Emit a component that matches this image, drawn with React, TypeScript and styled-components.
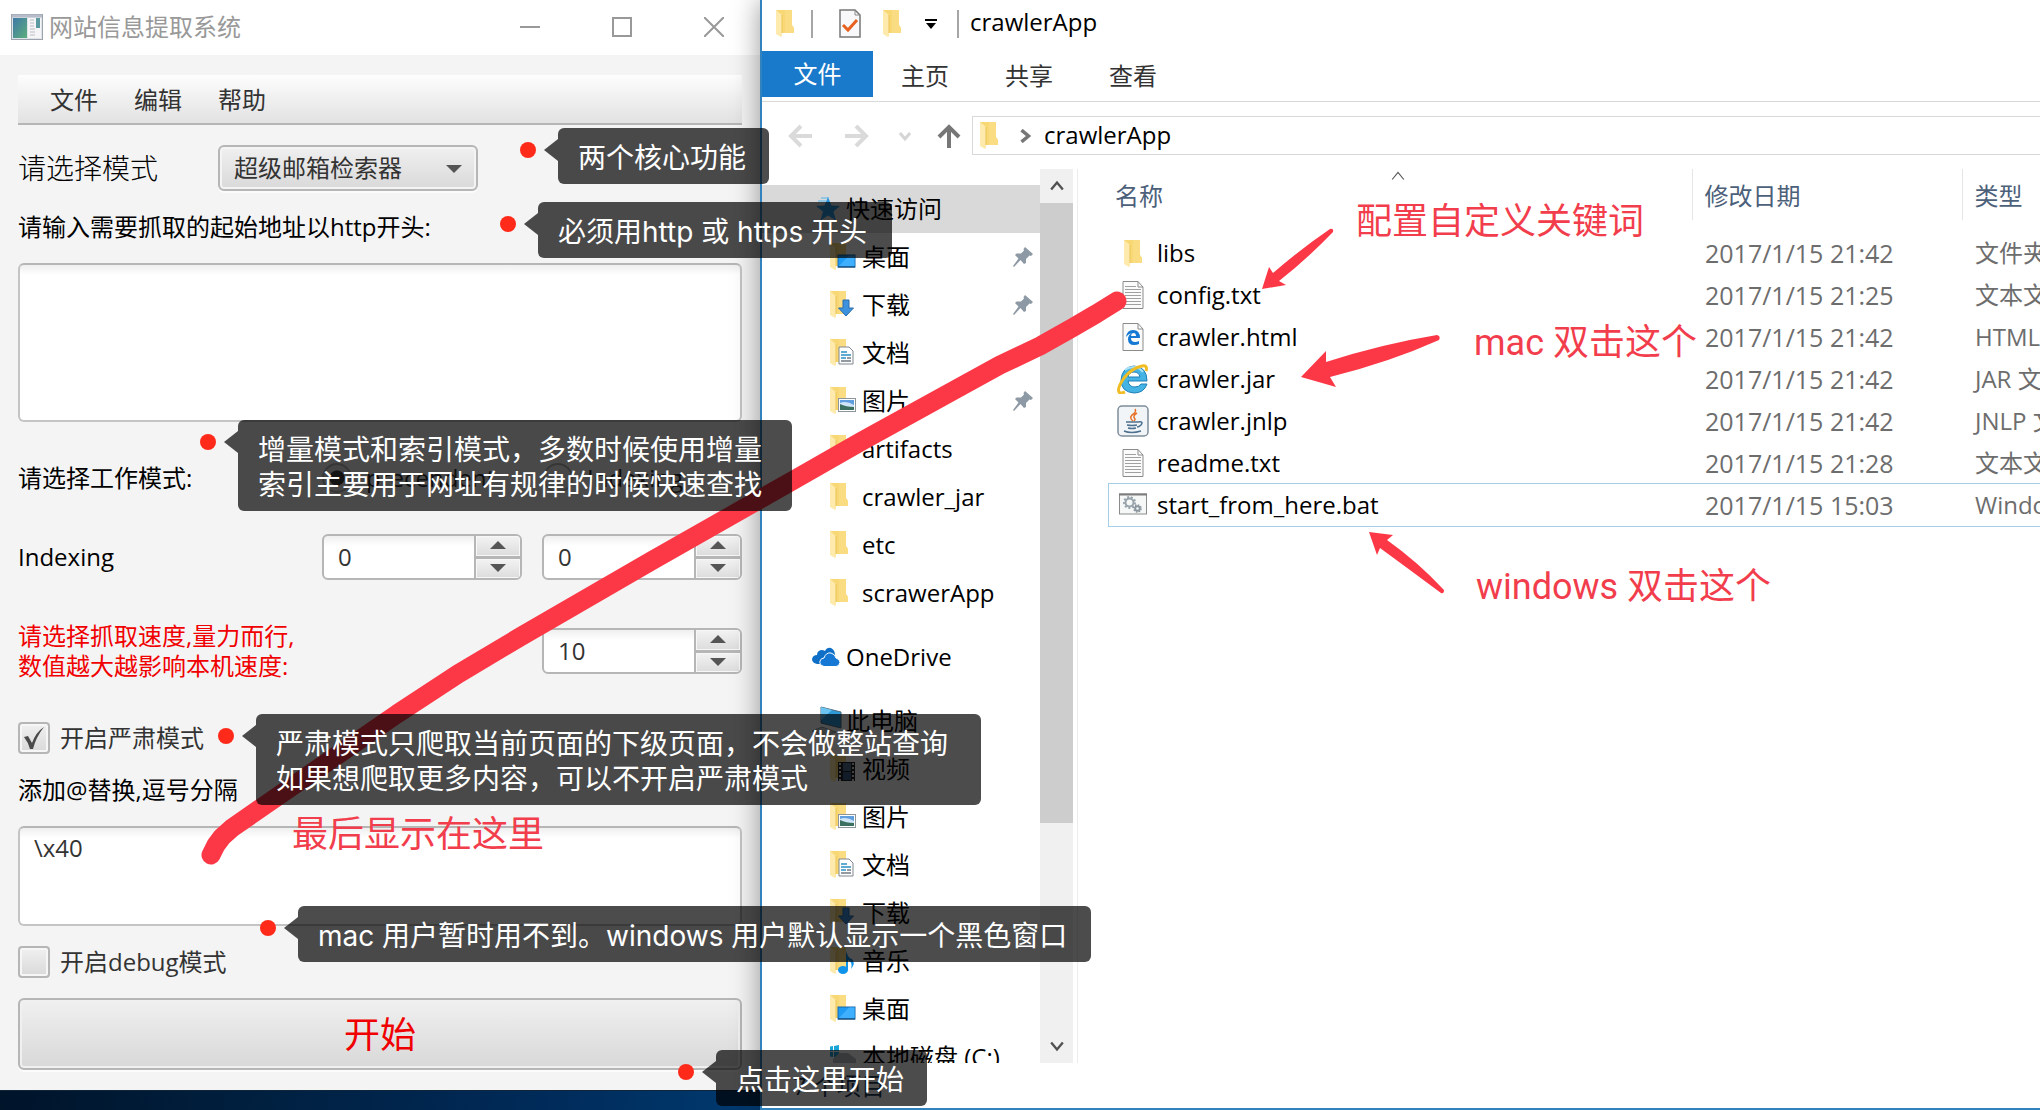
import React, { useState } from "react";
import styled, { createGlobalStyle } from "styled-components";

const uiFont = `"Open Sans", "Noto Sans", "Noto Sans CJK SC", sans-serif`;
const calloutFont = `Inter, Roboto, "Noto Sans CJK SC", sans-serif`;
const noteFont = `Roboto, "Noto Sans CJK SC", sans-serif`;
const borderGrey = "#b6b6b6";
const markRed = "#fc3847";

const GlobalStyle = createGlobalStyle`
  *, *::before, *::after { box-sizing: border-box; }
  body { margin: 0; background: #fff; font-family: ${uiFont}; font-size: 24px; line-height: 32px; color: #000; }
  button, input, select, textarea { font: inherit; color: inherit; margin: 0; }
  svg { display: block; flex: none; }
`;

const Screen = styled.div`
  position: relative;
  display: grid;
  grid-template-columns: minmax(0, 760px) minmax(0, 1fr);
  grid-template-rows: minmax(0, 1fr);
  height: 100vh;
  overflow: hidden;
`;

/* ---------- crawler window ---------- */

const CrawlerColumn = styled.div`
  display: flex;
  flex-direction: column;
  min-height: 0;
`;

const TitleBar = styled.header`
  display: flex;
  flex: none;
  align-items: center;
  height: 55px;
  padding: 0 0 2px 11px;
  background: #fff;
  color: #999;
`;

const TitleText = styled.h1`
  flex: 1;
  margin: 0 0 0 6px;
  font-size: 24px;
  font-weight: 400;
  line-height: 32px;
`;

const PlainButton = styled.button`
  display: grid;
  place-items: center;
  padding: 0;
  border: 0;
  background: none;
`;

const CaptionButton = styled(PlainButton)`
  width: 92px;
  height: 53px;
`;

const CrawlerForm = styled.form`
  display: flex;
  flex: none;
  flex-direction: column;
  gap: 20px;
  padding: 20px 18px;
  background: #f4f4f4;
`;

const MenuBar = styled.div`
  display: flex;
  gap: 36px;
  height: 50px;
  padding: 2px 32px 0;
  border-bottom: 2px solid ${borderGrey};
  background: linear-gradient(#fdfdfd, #e2e2e2);
`;

const MenuItem = styled(PlainButton)`
  color: #333;
`;

const Row = styled.div<{ $height: number; $spaced?: boolean }>`
  display: flex;
  align-items: center;
  min-height: ${(p) => p.$height}px;
  margin-top: ${(p) => (p.$spaced ? 20 : 0)}px;
`;

const RowLabel = styled.label`
  flex: 1;
`;

const ModeLabel = styled.label`
  width: 200px;
  font-size: 28px;
  font-weight: 300;
`;

const SpeedLabel = styled.label`
  flex: 1;
  color: #f00000;
  line-height: 30px;
`;

const SelectBox = styled.div`
  position: relative;
  width: 260px;
  svg {
    position: absolute;
    right: 16px;
    top: 20px;
    pointer-events: none;
  }
`;

const Select = styled.select`
  appearance: none;
  width: 100%;
  height: 46px;
  padding: 0 14px;
  border: 2px solid ${borderGrey};
  border-radius: 6px;
  background: linear-gradient(#f0f0f0, #d9d9d9);
  box-shadow: inset 0 0 0 2px #f4f4f4, 0 2px 0 #fbfbfb;
  color: #333;
`;

const TextBox = styled.textarea<{ $height: number }>`
  display: block;
  width: 100%;
  height: ${(p) => p.$height}px;
  padding: 4px 14px;
  border: 2px solid #c4c4c4;
  border-top-color: ${borderGrey};
  border-radius: 6px;
  background: linear-gradient(#efefef, #fff 10px);
  color: #333;
  resize: none;
  outline: 0;
`;

const SpinnerBox = styled.div`
  display: grid;
  grid-template-columns: 1fr 46px;
  width: 200px;
  height: 46px;
  margin-left: 20px;
  overflow: hidden;
  border: 2px solid ${borderGrey};
  border-radius: 6px;
  background: linear-gradient(#efefef, #fff 10px);
`;

const SpinnerInput = styled.input`
  appearance: textfield;
  width: 100%;
  padding: 0 14px;
  border: 0;
  outline: 0;
  background: none;
  color: #333;
  &::-webkit-inner-spin-button,
  &::-webkit-outer-spin-button {
    appearance: none;
    margin: 0;
  }
`;

const SpinnerArrows = styled.div`
  display: grid;
  grid-template-rows: 1fr 1fr;
  gap: 3px;
  border-left: 2px solid ${borderGrey};
  background: ${borderGrey};
`;

const SpinnerButton = styled(PlainButton)`
  background: linear-gradient(#f3f3f3, #dcdcdc);
  box-shadow: inset 0 0 0 1px #f7f7f7;
`;

const CheckLabel = styled.label`
  display: flex;
  align-items: center;
  gap: 10px;
  color: #333;
`;

const CheckCell = styled.span`
  display: grid;
  place-items: center;
  > * {
    grid-area: 1 / 1;
  }
  svg {
    pointer-events: none;
  }
`;

const CheckInput = styled.input`
  appearance: none;
  width: 32px;
  height: 32px;
  border: 2px solid ${borderGrey};
  border-radius: 4px;
  background: linear-gradient(#f0f0f0, #d9d9d9);
  box-shadow: inset 0 0 0 2px #f6f6f6;
`;

const RadioGroup = styled.div`
  display: flex;
  width: 420px;
`;

const RadioLabel = styled.label<{ $width: number }>`
  display: flex;
  align-items: center;
  gap: 14px;
  width: ${(p) => p.$width}px;
  color: #333;
`;

const RadioInput = styled.input`
  appearance: none;
  width: 30px;
  height: 30px;
  border: 2px solid ${borderGrey};
  border-radius: 50%;
  background: linear-gradient(#f4f4f4, #dcdcdc);
  &:checked {
    background: radial-gradient(#444 0 7px, #e6e6e6 8px);
  }
`;

const StartButton = styled.button`
  height: 72px;
  padding: 2px 0 0;
  border: 2px solid ${borderGrey};
  border-radius: 6px;
  background: linear-gradient(#f0f0f0, #d8d8d8);
  box-shadow: inset 0 0 0 2px #f0f0f0, 0 2px 0 #fcfcfc;
  color: #f00000;
  font-size: 36px;
`;

const Desktop = styled.div`
  flex: 1;
  border-top: 1px solid #10253a;
  background: linear-gradient(90deg, #00142a, #002040 35%, #002a58 70%, #003a70);
`;

/* ---------- explorer window ---------- */

const ExplorerWindow = styled.section`
  position: relative;
  display: flex;
  flex-direction: column;
  min-height: 0;
  border-left: 2px solid #3282bd;
  border-bottom: 2px solid #3282bd;
  background: #fff;
  box-shadow: 0 0 26px rgba(0, 0, 0, 0.4);
`;

const QuickBar = styled.header`
  display: flex;
  align-items: center;
  height: 51px;
  padding: 0 14px 4px;
`;

const QuickTitle = styled.span`
  padding-bottom: 4px;
`;

const QuickIcon = styled.span<{ $gap: number }>`
  margin-right: ${(p) => p.$gap}px;
`;

const QuickDivider = styled.span<{ $gap: number }>`
  width: 2px;
  height: 28px;
  margin-right: ${(p) => p.$gap}px;
  background: #a6a6a6;
`;

const Ribbon = styled.nav`
  display: flex;
  height: 51px;
  border-bottom: 1px solid #d9d9d9;
`;

const RibbonTab = styled(PlainButton)<{ $active?: boolean }>`
  width: ${(p) => (p.$active ? 111 : 104)}px;
  height: 46px;
  padding-top: ${(p) => (p.$active ? 0 : 4)}px;
  color: ${(p) => (p.$active ? "#fff" : "#333")};
  background: ${(p) => (p.$active ? "#1979ca" : "none")};
`;

const AddressRow = styled.div`
  display: flex;
  align-items: center;
  height: 67px;
`;

const NavButtons = styled.div`
  display: grid;
  grid-template-columns: 24px 24px 12px 24px;
  align-items: center;
  column-gap: 33px;
  width: 210px;
  padding-left: 26px;
  button:nth-child(n + 3) {
    justify-self: end;
    margin-right: 3px;
  }
  button:nth-child(4) {
    margin-right: 10px;
  }
`;

const AddressBox = styled.div`
  display: flex;
  align-items: center;
  flex: 1;
  height: 39px;
  padding-left: 7px;
  border: 1px solid #d9d9d9;
  border-right: 0;
`;

const Crumb = styled.a`
  margin-left: 12px;
  padding-bottom: 2px;
  color: #000;
  text-decoration: none;
`;

const CrumbArrow = styled.span`
  margin-left: 20px;
`;

const ExplorerBody = styled.div`
  display: grid;
  grid-template-columns: 278px 33px 5px minmax(0, 1fr);
  grid-template-rows: minmax(0, 1fr);
  flex: 1;
  min-height: 0;
`;

const Sidebar = styled.nav`
  overflow: hidden;
`;

const SideGroup = styled.ul`
  margin: 16px 0 0;
  padding: 0;
  list-style: none;
`;

const SideLink = styled.a<{ $level: number; $selected?: boolean }>`
  display: grid;
  grid-template-columns: ${(p) => (p.$level ? 26 : 30)}px 1fr 20px;
  column-gap: ${(p) => (p.$level ? 6 : 4)}px;
  align-items: center;
  height: 48px;
  padding: 0 7px 0 ${(p) => (p.$level ? 68 : 50)}px;
  background: ${(p) => (p.$selected ? "#d9d9d9" : "none")};
  color: #000;
  text-decoration: none;
  white-space: nowrap;
`;

const ScrollBar = styled.div`
  display: flex;
  flex-direction: column;
  background: #f0f0f0;
`;

const ScrollButton = styled(PlainButton)`
  height: 34px;
`;

const ScrollTrack = styled.div`
  flex: 1;
`;

const ScrollThumb = styled.div`
  height: 75%;
  background: #cdcdcd;
`;

const Splitter = styled.div`
  border-right: 1px solid #ececec;
`;

const FilePane = styled.main`
  min-width: 0;
  padding-left: 31px;
  overflow: hidden;
`;

const FileTable = styled.table`
  width: 100%;
  table-layout: fixed;
  border-collapse: collapse;
`;

const HeadCell = styled.th<{ $width?: string; $inset: number }>`
  position: relative;
  width: ${(p) => p.$width ?? "auto"};
  height: 51px;
  padding: 2px 0 0 ${(p) => p.$inset}px;
  border-left: ${(p) => (p.$inset > 6 ? "1px solid #e5e5e5" : "0")};
  color: #4c607a;
  font-weight: 400;
  text-align: left;
  white-space: nowrap;
  overflow: hidden;
`;

const SortMark = styled.span`
  position: absolute;
  top: 0;
  left: 282px;
`;

const HeadGap = styled.tr`
  height: 12px;
`;

const FileRow = styled.tr<{ $focused?: boolean }>`
  height: 42px;
  outline: ${(p) => (p.$focused ? "1px solid #a6cde8" : "0")};
`;

const NameCell = styled.td`
  padding: 0;
`;

const NameLayout = styled.span`
  display: grid;
  grid-template-columns: 32px 1fr;
  column-gap: 8px;
  align-items: center;
  justify-items: center;
  padding-left: 8px;
`;

const FileName = styled.span`
  justify-self: start;
`;

const InfoCell = styled.td<{ $size: number }>`
  padding: 0 0 0 13px;
  color: #6d6d6d;
  font-size: ${(p) => p.$size}px;
  white-space: nowrap;
  overflow: hidden;
`;

const StatusBar = styled.footer`
  height: 45px;
  padding: 7px 31px;
  color: #1e395b;
`;

/* ---------- annotations ---------- */

const MarkLayer = styled.svg`
  position: absolute;
  left: 0;
  top: 0;
  pointer-events: none;
`;

const Callout = styled.div<{ $x: number; $y: number; $width: number }>`
  position: absolute;
  left: ${(p) => p.$x}px;
  top: ${(p) => p.$y}px;
  width: ${(p) => p.$width}px;
  padding: 13px 20px 8px;
  border-radius: 6px;
  background: rgba(0, 0, 0, 0.7);
  color: #fff;
  font-family: ${calloutFont};
  font-size: 28px;
  line-height: 35px;
  white-space: pre;
  &::before {
    content: "";
    position: absolute;
    left: -14px;
    top: 11px;
    border: solid transparent;
    border-width: 11px 14px 11px 0;
    border-right-color: rgba(0, 0, 0, 0.7);
  }
  &::after {
    content: "";
    position: absolute;
    left: -38px;
    top: 14px;
    width: 16px;
    height: 16px;
    border-radius: 50%;
    background: #ff2a1a;
  }
`;

const RedNote = styled.div<{ $x: number; $y: number }>`
  position: absolute;
  left: ${(p) => p.$x}px;
  top: ${(p) => p.$y}px;
  color: #f23d4c;
  font-family: ${noteFont};
  font-size: 36px;
  line-height: 44px;
  white-space: nowrap;
`;

/* ---------- icons ---------- */

const folderShapes = (
  <>
    <path d="M0 0H16V15L18 18V23H3Z" fill="#f8d775" />
    <path d="M9 0H16V15L18 18V23H9Z" fill="#fbdf8b" opacity="0.6" />
    <path d="M0 0L6 5V26L5 27L0 24Z" fill="#fdeaac" />
    <path d="M6 5V23" stroke="#ecc55a" strokeWidth="1" />
  </>
);

const FolderIcon = () => (
  <svg width="18" height="27" viewBox="0 0 18 27">{folderShapes}</svg>
);

type Badge = "desktop" | "download" | "document" | "picture" | "video" | "music" | "none";

const badgeShapes: Record<Badge, React.ReactNode> = {
  none: null,
  desktop: (
    <>
      <rect x="8" y="12" width="17" height="12" fill="#1e9bf5" stroke="#1669a8" />
      <path d="M9 23L19 12.500H24.500V23Z" fill="#3fb0ff" />
      <path d="M8 24H25" stroke="#123f68" />
    </>
  ),
  download: <path d="M13 9H19V17H23.500L16 25L8.500 17H13Z" fill="#3c92dd" stroke="#2a6cae" />,
  document: (
    <>
      <path d="M9 8H19L23 12V25H9Z" fill="#fff" stroke="#7e8790" />
      <path d="M11 13H17M11 16H21M11 19H16" stroke="#2e8fc4" strokeWidth="1.500" />
      <path d="M17 19H21M11 22H21" stroke="#707a84" strokeWidth="1.500" />
    </>
  ),
  picture: (
    <>
      <rect x="8.500" y="11.500" width="17" height="13" fill="#fff" stroke="#8c949c" />
      <rect x="10" y="13" width="14" height="10" fill="#5f9fe0" />
      <path d="M10 16Q16 13 24 18V20H10Z" fill="#cfe5f7" />
      <path d="M10 17Q16 20 24 20V23H10Z" fill="#3b7060" />
    </>
  ),
  video: (
    <>
      <rect x="8" y="7" width="17" height="19" fill="#222" />
      <path d="M10 8V26M23 8V26" stroke="#ddd" strokeWidth="2" strokeDasharray="2 2" />
      <rect x="13" y="8" width="8" height="8" fill="#56708c" />
      <rect x="13" y="17" width="8" height="8" fill="#3e5a86" />
    </>
  ),
  music: (
    <>
      <ellipse cx="13" cy="23" rx="5" ry="4" fill="#1193ea" />
      <path d="M16 23V4Q18 11 22 12Q26 16 21 22Q23 15 18 13V23Z" fill="#1193ea" />
    </>
  ),
};

const BadgedFolder = ({ badge }: { badge: Badge }) => (
  <svg width="26" height="28" viewBox="0 0 26 28">
    {folderShapes}
    {badgeShapes[badge]}
  </svg>
);

const StarIcon = () => (
  <svg width="30" height="26" viewBox="-3 0 30 26">
    <path d="M13 1L16.500 9.500L25 10L18.500 15.500L21 24.500L13 19.500L5.500 24.500L8 15.500L1 10L9.500 9.500Z" fill="#2b94da" />
    <path d="M6 2H14M3 5H11" stroke="#4fb4ee" />
  </svg>
);

const CloudIcon = () => (
  <svg width="28" height="20" viewBox="0 0 28 20">
    <path d="M5 17Q0 16 0 12Q1 8 5 8Q5 4 9 3Q12 3 13 4Q15 0 19 1Q23 3 23 8L14 17Z" fill="#0f6fc6" />
    <path d="M12 19.500Q7 18 8 14Q9 11 12 11Q14 5 19 6Q23 7 24 11Q28 12 28 15.500Q27 19.500 24 19.500Z" fill="#1478d4" stroke="#fff" />
  </svg>
);

const ComputerIcon = () => (
  <svg width="30" height="30" viewBox="0 0 30 30">
    <path d="M9 1L29 6V22L9 17Z" fill="#2c9bd8" stroke="#4f6b7e" />
    <path d="M9 1L20 4L9 14Z" fill="#6cc4f0" />
    <path d="M0 25L10 21L24 26L14 30Z" fill="#c7cdd2" stroke="#929ba3" />
  </svg>
);

const DiskIcon = () => (
  <svg width="30" height="26" viewBox="3 0 30 26">
    <path d="M1 3L6 2V7H1ZM7 2L12 1V7H7ZM1 8H6V13L1 12ZM7 8H12V14L7 13Z" fill="#18a5d8" />
    <path d="M6 15L12 9H21L29 15V21H6Z" fill="#b9bec3" />
  </svg>
);

const PinIcon = () => (
  <svg width="20" height="20" viewBox="0 0 20 20">
    <path d="M12 0L20 7L18 9L16.500 8.500L13 12V16L11 17L7.500 13L1 20L0 19L5.500 11.500L2 8L3.500 6.500H8L11 3.500L10.500 2Z" fill="#8d9aa5" />
  </svg>
);

const TextFileIcon = () => (
  <svg width="22" height="28" viewBox="0 0 22 28">
    <path d="M1 .5H16L21 6V27.500H1Z" fill="#fbfbfb" stroke="#8b8b8b" />
    <path d="M16 .5V6H21" fill="none" stroke="#8b8b8b" />
    <path d="M3 5.500H14M3 8.500H19M3 11.500H19M3 14.500H19M3 17.500H19M3 20.500H19M3 23.500H19" stroke="#a0a0a0" />
  </svg>
);

const CheckFileIcon = () => (
  <svg width="22" height="29" viewBox="0 0 22 29">
    <path d="M1 1H16L21 6V28H1Z" fill="#f8f8fa" stroke="#777" strokeWidth="1.500" />
    <path d="M16 1V6H21" fill="none" stroke="#888" />
    <path d="M4 16L9 21L18 11" fill="none" stroke="#e8601f" strokeWidth="3" />
  </svg>
);

const HtmlFileIcon = () => (
  <svg width="22" height="28" viewBox="0 0 22 28">
    <path d="M1 .5H16L21 6V27.500H1Z" fill="#fbfbfb" stroke="#8b8b8b" />
    <path d="M16 .5V6H21" fill="none" stroke="#8b8b8b" />
    <path d="M4 14Q5 7 11 7Q18 7 18 15H9Q9 19 13 19Q15 19 17 18V21Q15 22 12 22Q6 22 6 16Q6 12 10 10Q6 11 4 14ZM9 13H14Q14 10 11.500 10Q9.500 10 9 13Z" fill="#1478d4" fillRule="evenodd" />
  </svg>
);

const ExplorerIcon = () => (
  <svg width="32" height="30" viewBox="0 0 32 30">
    <path d="M30 17H11Q12 23 18 23Q22 23 24 20H30Q27 29 17 29Q4 28 4 16Q5 3 17 2Q30 3 30 17ZM11 13H23Q22 8 17 8Q12 8 11 13Z" fill="#45b4e4" stroke="#1d7fb8" fillRule="evenodd" />
    <path d="M8 6Q12 3 18 3Q23 4 26 8" fill="none" stroke="#a8e2f7" strokeWidth="2" />
    <path d="M29 7Q31 1 25 2Q15 4 7 14Q0 24 2 28Q3 30 8 28" fill="none" stroke="#f0bd24" strokeWidth="3" />
  </svg>
);

const JavaIcon = () => (
  <svg width="32" height="32" viewBox="0 0 32 32">
    <rect x="1" y="1" width="30" height="30" rx="4" fill="#f2f5f7" stroke="#7f8d99" strokeWidth="1.500" />
    <path d="M18 4Q20 7 15 10Q12 13 16 16M20 8Q15 11 18 14Q18 15 17 16" fill="none" stroke="#e6702a" strokeWidth="1.500" />
    <path d="M9 17H21Q27 16 24 20Q22 22 20 22M10 20Q15 21 20 20M11 23Q15 24 19 23M7 26Q14 29 24 26" fill="none" stroke="#4d7190" strokeWidth="1.500" />
  </svg>
);

const BatchIcon = () => (
  <svg width="28" height="25" viewBox="0 0 28 25">
    <rect x=".5" y="1" width="27" height="20" fill="#f6f7f7" stroke="#8b8b8b" />
    <path d="M0 1.500H28" stroke="#7c7c7c" strokeWidth="2" />
    <circle cx="10.500" cy="9.500" r="4" fill="none" stroke="#98a4ac" strokeWidth="2" />
    <circle cx="10.500" cy="9.500" r="5.500" fill="none" stroke="#98a4ac" strokeWidth="2" strokeDasharray="2 1.800" />
    <circle cx="18.500" cy="15.500" r="2.300" fill="none" stroke="#8b979f" strokeWidth="2" />
    <circle cx="18.500" cy="15.500" r="3.600" fill="none" stroke="#8b979f" strokeWidth="1.500" strokeDasharray="1.500 1.300" />
  </svg>
);

const AppIcon = () => (
  <svg width="32" height="26" viewBox="0 0 32 26">
    <defs>
      <linearGradient id="appPane" x1="0" y1="0" x2="1" y2="1">
        <stop offset="0" stopColor="#3f78a8" />
        <stop offset="1" stopColor="#5cae7c" />
      </linearGradient>
    </defs>
    <rect x=".5" y=".5" width="31" height="25" fill="#dfe3ea" stroke="#9da3ad" />
    <path d="M1 2H31" stroke="#b6bcc8" strokeWidth="3" />
    <rect x="2" y="4" width="14" height="20" fill="url(#appPane)" />
    <rect x="17" y="4" width="13" height="20" fill="#f5f5f7" />
    <rect x="25" y="4" width="4" height="10" fill="#5a9aa0" />
    <path d="M19 6H23M19 9H23M19 12H23M19 15H24M19 18H24M19 21H24" stroke="#b9bdc4" />
  </svg>
);

const Triangle = ({ up, width = 16 }: { up?: boolean; width?: number }) => (
  <svg width={width} height="9" viewBox="0 0 16 9">
    <path d={up ? "M0 8L8 0L16 8Z" : "M0 0H16L8 8Z"} fill="#555" />
  </svg>
);

const Chevron = ({ turn, color, size = 12, weight = 3 }: { turn: number; color: string; size?: number; weight?: number }) => (
  <svg width={size} height={size} viewBox="0 0 12 12">
    <path d="M1 9L6 3L11 9" fill="none" stroke={color} strokeWidth={weight} transform={`rotate(${turn} 6 6)`} />
  </svg>
);

const Arrow = ({ turn, color, weight = 4 }: { turn: number; color: string; weight?: number }) => (
  <svg width="24" height="24" viewBox="0 0 24 24">
    <path d="M2 13L12 3L22 13M12 3V24" fill="none" stroke={color} strokeWidth={weight} transform={`rotate(${turn} 12 12)`} />
  </svg>
);

/* ---------- parts ---------- */

const Spinner = ({ label, id, initial }: { label?: string; id: string; initial: number }) => {
  const [value, setValue] = useState(initial);
  return (
    <SpinnerBox>
      <SpinnerInput id={id} aria-label={label} type="number" value={value} onChange={(e) => setValue(Number(e.target.value))} />
      <SpinnerArrows>
        <SpinnerButton type="button" aria-label="+" onClick={() => setValue(value + 1)}>
          <Triangle up />
        </SpinnerButton>
        <SpinnerButton type="button" aria-label="-" onClick={() => setValue(value - 1)}>
          <Triangle />
        </SpinnerButton>
      </SpinnerArrows>
    </SpinnerBox>
  );
};

const CheckBox = ({ label, initial }: { label: string; initial: boolean }) => {
  const [checked, setChecked] = useState(initial);
  return (
    <CheckLabel>
      <CheckCell>
        <CheckInput type="checkbox" checked={checked} onChange={() => setChecked(!checked)} />
        {checked && (
          <svg width="22" height="24" viewBox="0 0 22 24">
            <path d="M1 11L5 10L9 17Q13 6 21 1Q13 11 10 23H7Q5 16 1 11Z" fill="#4a4a4a" />
          </svg>
        )}
      </CheckCell>
      {label}
    </CheckLabel>
  );
};

type SideItem = { name: string; icon: React.ReactNode; level: number; pinned?: boolean; selected?: boolean };

const folder = (name: string, badge: Badge = "none", pinned = false): SideItem => ({
  name,
  icon: <BadgedFolder badge={badge} />,
  level: 1,
  pinned,
});

const sideGroups: SideItem[][] = [
  [
    { name: "快速访问", icon: <StarIcon />, level: 0, selected: true },
    folder("桌面", "desktop", true),
    folder("下载", "download", true),
    folder("文档", "document"),
    folder("图片", "picture", true),
    folder("artifacts"),
    folder("crawler_jar"),
    folder("etc"),
    folder("scrawerApp"),
  ],
  [{ name: "OneDrive", icon: <CloudIcon />, level: 0 }],
  [
    { name: "此电脑", icon: <ComputerIcon />, level: 0 },
    folder("视频", "video"),
    folder("图片", "picture"),
    folder("文档", "document"),
    folder("下载", "download"),
    folder("音乐", "music"),
    folder("桌面", "desktop"),
    { name: "本地磁盘 (C:)", icon: <DiskIcon />, level: 1 },
  ],
];

const files = [
  { name: "libs", icon: <FolderIcon />, date: "2017/1/15 21:42", type: "文件夹" },
  { name: "config.txt", icon: <TextFileIcon />, date: "2017/1/15 21:25", type: "文本文档" },
  { name: "crawler.html", icon: <HtmlFileIcon />, date: "2017/1/15 21:42", type: "HTML 文件" },
  { name: "crawler.jar", icon: <ExplorerIcon />, date: "2017/1/15 21:42", type: "JAR 文件" },
  { name: "crawler.jnlp", icon: <JavaIcon />, date: "2017/1/15 21:42", type: "JNLP 文件" },
  { name: "readme.txt", icon: <TextFileIcon />, date: "2017/1/15 21:28", type: "文本文档" },
  { name: "start_from_here.bat", icon: <BatchIcon />, date: "2017/1/15 15:03", type: "Windows 批处理文件", focused: true },
];

const callouts = [
  { x: 558, y: 128, width: 211, text: "两个核心功能" },
  { x: 538, y: 202, width: 354, text: "必须用http 或 https 开头" },
  { x: 238, y: 420, width: 554, text: "增量模式和索引模式，多数时候使用增量\n索引主要用于网址有规律的时候快速查找" },
  { x: 256, y: 714, width: 725, text: "严肃模式只爬取当前页面的下级页面，不会做整站查询\n如果想爬取更多内容，可以不开启严肃模式" },
  { x: 298, y: 906, width: 793, text: "mac 用户暂时用不到。windows 用户默认显示一个黑色窗口" },
  { x: 716, y: 1050, width: 211, text: "点击这里开始" },
];

const CrawlerApp = () => (
  <CrawlerColumn>
    <TitleBar>
      <AppIcon />
      <TitleText>网站信息提取系统</TitleText>
      <CaptionButton type="button" aria-label="最小化">
        <svg width="20" height="20" viewBox="0 0 20 20"><path d="M0 10H20" stroke="#999" strokeWidth="2" /></svg>
      </CaptionButton>
      <CaptionButton type="button" aria-label="最大化">
        <svg width="20" height="20" viewBox="0 0 20 20"><rect x="1" y="1" width="18" height="18" fill="none" stroke="#999" strokeWidth="2" /></svg>
      </CaptionButton>
      <CaptionButton type="button" aria-label="关闭">
        <svg width="20" height="20" viewBox="0 0 20 20"><path d="M0 0L20 20M20 0L0 20" stroke="#999" strokeWidth="2" /></svg>
      </CaptionButton>
    </TitleBar>
    <CrawlerForm onSubmit={(e) => e.preventDefault()}>
      <MenuBar>
        <MenuItem type="button">文件</MenuItem>
        <MenuItem type="button">编辑</MenuItem>
        <MenuItem type="button">帮助</MenuItem>
      </MenuBar>
      <Row $height={46}>
        <ModeLabel htmlFor="mode">请选择模式</ModeLabel>
        <SelectBox>
          <Select id="mode">
            <option>超级邮箱检索器</option>
          </Select>
          <Triangle />
        </SelectBox>
      </Row>
      <RowLabel htmlFor="address">请输入需要抓取的起始地址以http开头:</RowLabel>
      <TextBox id="address" $height={159} />
      <Row $height={32} $spaced>
        <RowLabel as="span">请选择工作模式:</RowLabel>
        <RadioGroup>
          <RadioLabel $width={221}>
            <RadioInput type="radio" name="work" defaultChecked />
            precendent
          </RadioLabel>
          <RadioLabel $width={180}>
            <RadioInput type="radio" name="work" />
            Indexing
          </RadioLabel>
        </RadioGroup>
      </Row>
      <Row $height={46} $spaced>
        <RowLabel htmlFor="indexFrom">Indexing</RowLabel>
        <Spinner id="indexFrom" initial={0} />
        <Spinner id="indexTo" label="Indexing" initial={0} />
      </Row>
      <Row $height={62} $spaced>
        <SpeedLabel htmlFor="speed">
          请选择抓取速度,量力而行,
          <br />
          数值越大越影响本机速度:
        </SpeedLabel>
        <Spinner id="speed" initial={10} />
      </Row>
      <Row $height={32} $spaced>
        <CheckBox label="开启严肃模式" initial />
      </Row>
      <RowLabel htmlFor="replace">添加@替换,逗号分隔</RowLabel>
      <TextBox id="replace" $height={100} defaultValue={"\\x40"} />
      <Row $height={32}>
        <CheckBox label="开启debug模式" initial={false} />
      </Row>
      <StartButton type="submit">开始</StartButton>
    </CrawlerForm>
    <Desktop />
  </CrawlerColumn>
);

const Explorer = () => (
  <ExplorerWindow>
    <QuickBar>
      <QuickIcon $gap={17}><FolderIcon /></QuickIcon>
      <QuickDivider $gap={26} />
      <QuickIcon $gap={22}><CheckFileIcon /></QuickIcon>
      <QuickIcon $gap={24}><FolderIcon /></QuickIcon>
      <QuickIcon $gap={20}>
        <svg width="12" height="10" viewBox="0 0 12 10"><path d="M0 1H12" stroke="#000" strokeWidth="2" /><path d="M1 4H11L6 10Z" /></svg>
      </QuickIcon>
      <QuickDivider $gap={11} />
      <QuickTitle>crawlerApp</QuickTitle>
    </QuickBar>
    <Ribbon>
      <RibbonTab type="button" $active>文件</RibbonTab>
      <RibbonTab type="button">主页</RibbonTab>
      <RibbonTab type="button">共享</RibbonTab>
      <RibbonTab type="button">查看</RibbonTab>
    </Ribbon>
    <AddressRow>
      <NavButtons>
        <PlainButton type="button" aria-label="后退"><Arrow turn={-90} color="#dadada" /></PlainButton>
        <PlainButton type="button" aria-label="前进"><Arrow turn={90} color="#dadada" /></PlainButton>
        <PlainButton type="button" aria-label="历史"><Chevron turn={180} color="#d5d5d5" /></PlainButton>
        <PlainButton type="button" aria-label="向上"><Arrow turn={0} color="#777" /></PlainButton>
      </NavButtons>
      <AddressBox>
        <FolderIcon />
        <CrumbArrow><Chevron turn={90} color="#777" size={14} weight={3} /></CrumbArrow>
        <Crumb href="#crawlerApp">crawlerApp</Crumb>
      </AddressBox>
    </AddressRow>
    <ExplorerBody>
      <Sidebar>
        {sideGroups.map((group, g) => (
          <SideGroup key={g}>
            {group.map((item) => (
              <li key={item.name}>
                <SideLink href="#files" $level={item.level} $selected={item.selected}>
                  {item.icon}
                  <span>{item.name}</span>
                  {item.pinned && <PinIcon />}
                </SideLink>
              </li>
            ))}
          </SideGroup>
        ))}
      </Sidebar>
      <ScrollBar>
        <ScrollButton type="button" aria-label="向上滚动"><Chevron turn={0} color="#505050" size={14} weight={2} /></ScrollButton>
        <ScrollTrack><ScrollThumb /></ScrollTrack>
        <ScrollButton type="button" aria-label="向下滚动"><Chevron turn={180} color="#505050" size={14} weight={2} /></ScrollButton>
      </ScrollBar>
      <Splitter />
      <FilePane>
        <FileTable>
          <thead>
            <tr>
              <HeadCell $inset={6}>
                名称
                <SortMark><Chevron turn={0} color="#555" size={14} weight={1} /></SortMark>
              </HeadCell>
              <HeadCell $width="270px" $inset={12}>修改日期</HeadCell>
              <HeadCell $width="78px" $inset={12}>类型</HeadCell>
            </tr>
          </thead>
          <tbody>
            <HeadGap />
            {files.map((file) => (
              <FileRow key={file.name} $focused={file.focused}>
                <NameCell>
                  <NameLayout>
                    {file.icon}
                    <FileName>{file.name}</FileName>
                  </NameLayout>
                </NameCell>
                <InfoCell $size={25}>{file.date}</InfoCell>
                <InfoCell $size={24}>{file.type}</InfoCell>
              </FileRow>
            ))}
          </tbody>
        </FileTable>
      </FilePane>
    </ExplorerBody>
    <StatusBar>7 个项目</StatusBar>
  </ExplorerWindow>
);

export default function App() {
  return (
    <>
      <GlobalStyle />
      <Screen>
        <CrawlerApp />
        <Explorer />
        <MarkLayer width="2040" height="1110" viewBox="0 0 2040 1110">
          <path
            d="M211 855L216 845L222 837L232 828L271 801L397 714L458 674L520 637L653 560L792 481L862 441L960 387L1000 365L1040 346L1072 328L1096 314L1117 301"
            fill="none"
            stroke={markRed}
            strokeWidth="19"
            strokeLinecap="round"
            strokeLinejoin="round"
          />
          <g fill={markRed}>
            <path d="M1262 289L1269 267L1273 273Q1302 248 1330 229Q1334 228 1333 232Q1306 260 1279 281L1286 285Z" />
            <path d="M1301 377L1326 351V362Q1382 344 1437 335Q1441 336 1439 340Q1390 362 1330 377L1336 387Z" />
            <path d="M1369 532L1393 535L1387 540Q1418 562 1444 590Q1444 594 1441 593Q1410 570 1380 548L1377 555Z" />
          </g>
        </MarkLayer>
        <RedNote $x={1356} $y={200}>配置自定义关键词</RedNote>
        <RedNote $x={1474} $y={321}>mac 双击这个</RedNote>
        <RedNote $x={1476} $y={565}>windows 双击这个</RedNote>
        <RedNote $x={292} $y={813}>最后显示在这里</RedNote>
        {callouts.map((c) => (
          <Callout key={c.y} $x={c.x} $y={c.y} $width={c.width}>{c.text}</Callout>
        ))}
      </Screen>
    </>
  );
}
